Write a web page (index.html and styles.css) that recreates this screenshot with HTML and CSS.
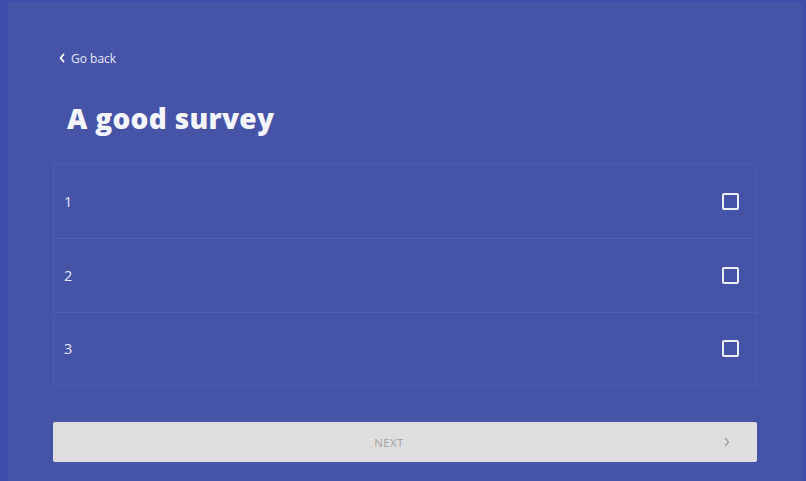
FILE: index.html
```html
<!DOCTYPE html>
<html lang="en">
<head>
<meta charset="utf-8">
<title>A good survey</title>
<link rel="stylesheet" href="styles.css">
</head>
<body>
<div class="frame">
  <main class="page">
    <a class="back" href="#">
      <svg class="back-icon" width="8" height="10" viewBox="0 0 8 10" aria-hidden="true"><path d="M5.5 1.5 2.5 5l3 3.5" fill="none" stroke="currentColor" stroke-width="1.8" stroke-linecap="round" stroke-linejoin="round"/></svg>
      <span>Go back</span>
    </a>
    <h1 class="title">A good survey</h1>
    <ul class="options">
      <li class="option"><span class="label">1</span><span class="box"></span></li>
      <li class="option"><span class="label">2</span><span class="box"></span></li>
      <li class="option"><span class="label">3</span><span class="box"></span></li>
    </ul>
    <button class="next" type="button">
      <span class="next-text">NEXT</span>
      <svg class="next-icon" width="8" height="10" viewBox="0 0 8 10" aria-hidden="true"><path d="M2.5 1.5 5.5 5l-3 3.5" fill="none" stroke="currentColor" stroke-width="1.3" stroke-linecap="round" stroke-linejoin="round"/></svg>
    </button>
  </main>
</div>
</body>
</html>
```
FILE: styles.css
```css
html, body {
  margin: 0;
  padding: 0;
  height: 100%;
}
body {
  background: #3e4caa;
  font-family: "Open Sans", "DejaVu Sans", sans-serif;
  overflow: hidden;
}
.frame {
  padding: 3px 4px 0 8px;
  height: 100%;
  box-sizing: border-box;
}
.page {
  background: #4654a7;
  height: 100%;
  box-sizing: border-box;
  padding: 47px 45px 0 45px;
  display: flex;
  flex-direction: column;
}
.back {
  display: flex;
  align-items: center;
  gap: 5px;
  color: #e4e7f6;
  text-decoration: none;
  font-size: 12px;
  margin-left: 5px;
  height: 16px;
}
.back-icon {
  color: #ffffff;
}
.title {
  margin: 33px 0 0 14px;
  font-size: 28px;
  font-weight: 800;
  color: #f4f5fb;
  line-height: 38px;
  letter-spacing: 0.3px;
}
.options {
  list-style: none;
  margin: 27px 0 0 0;
  padding: 0;
  border: 1px solid #4f5cad;
}
.option {
  display: flex;
  align-items: center;
  justify-content: space-between;
  height: 72.5px;
  padding: 0 17px 0 10px;
  border-top: 1px solid #515fb0;
  color: #e4e7f6;
  font-size: 14.5px;
}
.option:first-child {
  border-top: none;
  height: 73px;
}
.box {
  width: 13px;
  height: 13px;
  border: 2px solid #eceef8;
  border-radius: 2px;
}
.next {
  margin-top: 36px;
  height: 40px;
  border: none;
  border-radius: 2px;
  background: #dedede;
  color: #a3a3a3;
  font-family: inherit;
  font-size: 11.5px;
  display: flex;
  align-items: center;
  padding: 0 26px 0 0;
}
.next-text {
  flex: 1;
  text-align: center;
  letter-spacing: 0.4px;
  padding-left: 2px;
}
.next-icon {
  color: #a0a0a0;
}
```
